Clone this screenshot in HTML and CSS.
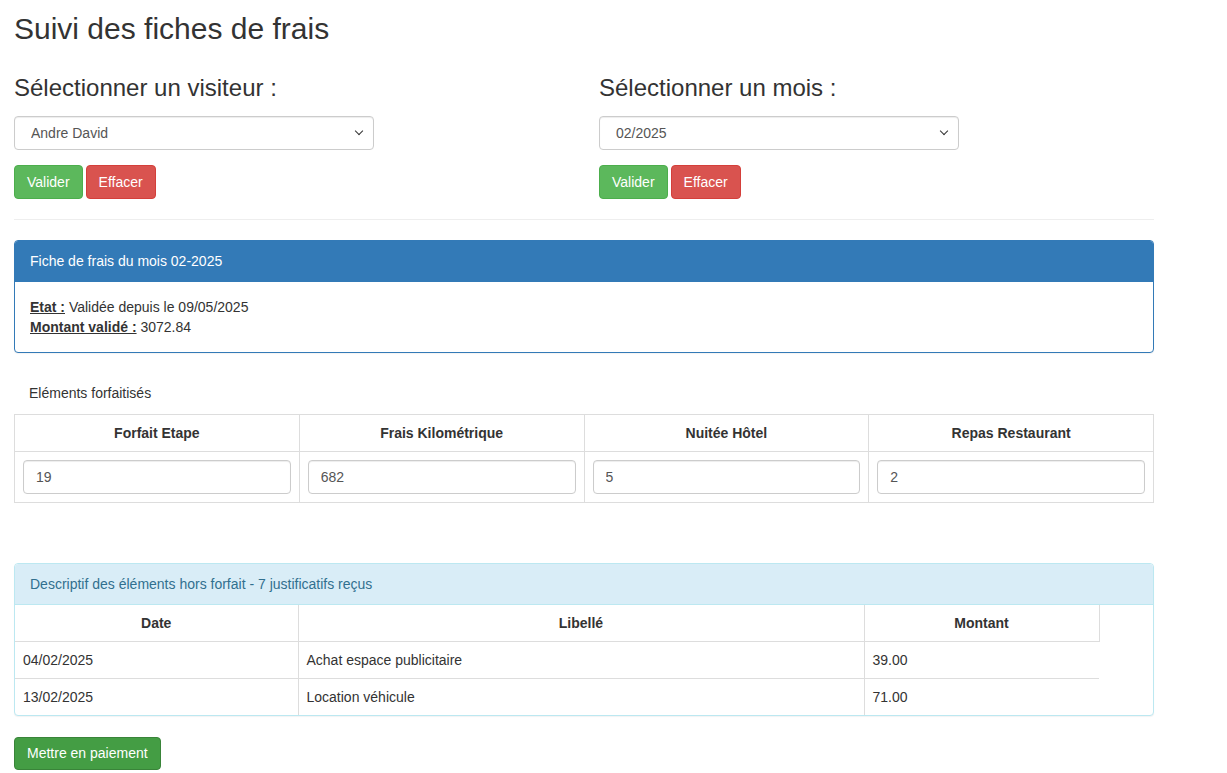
FILE: index.html
```html
<!DOCTYPE html>
<html lang="fr">
<head>
<meta charset="utf-8">
<title>Suivi des fiches de frais</title>
<link rel="stylesheet" href="styles.css">
</head>
<body>
<div class="container">
  <h2 class="title">Suivi des fiches de frais</h2>
  <div class="row">
    <div class="col">
      <h3 class="sub">Sélectionner un visiteur :</h3>
      <div class="select-wrap">
        <select class="form-control"><option>Andre David</option></select>
      </div>
      <div class="btns">
        <button class="btn btn-success">Valider</button>
        <button class="btn btn-danger">Effacer</button>
      </div>
    </div>
    <div class="col">
      <h3 class="sub">Sélectionner un mois :</h3>
      <div class="select-wrap">
        <select class="form-control"><option>02/2025</option></select>
      </div>
      <div class="btns">
        <button class="btn btn-success">Valider</button>
        <button class="btn btn-danger">Effacer</button>
      </div>
    </div>
  </div>
  <hr class="sep">

  <div class="panel panel-primary">
    <div class="panel-heading">Fiche de frais du mois 02-2025</div>
    <div class="panel-body">
      <div><strong class="ul">Etat :</strong> Validée depuis le 09/05/2025</div>
      <div><strong class="ul">Montant validé :</strong> 3072.84</div>
    </div>
  </div>

  <div class="caption">Eléments forfaitisés</div>
  <table class="table table-forfait">
    <thead>
      <tr><th>Forfait Etape</th><th>Frais Kilométrique</th><th>Nuitée Hôtel</th><th>Repas Restaurant</th></tr>
    </thead>
    <tbody>
      <tr>
        <td><input class="form-control input" type="text" value="19"></td>
        <td><input class="form-control input" type="text" value="682"></td>
        <td><input class="form-control input" type="text" value="5"></td>
        <td><input class="form-control input" type="text" value="2"></td>
      </tr>
    </tbody>
  </table>

  <div class="panel panel-info">
    <div class="panel-heading">Descriptif des éléments hors forfait - 7 justificatifs reçus</div>
    <table class="table table-hf">
      <colgroup><col class="c-date"><col class="c-lib"><col class="c-mont"></colgroup>
      <thead>
        <tr><th>Date</th><th>Libellé</th><th>Montant</th></tr>
      </thead>
      <tbody>
        <tr><td>04/02/2025</td><td>Achat espace publicitaire</td><td>39.00</td></tr>
        <tr><td>13/02/2025</td><td>Location véhicule</td><td>71.00</td></tr>
      </tbody>
    </table>
  </div>

  <button class="btn btn-pay">Mettre en paiement</button>
</div>
</body>
</html>
```

FILE: styles.css
```css
* { box-sizing: border-box; }
html, body { margin: 0; padding: 0; background: #fff; }
body {
  font-family: "Liberation Sans", Arial, Helvetica, sans-serif;
  font-size: 14px;
  line-height: 20px;
  color: #333;
}
.container { width: 1140px; margin-left: 14px; }

.title {
  font-size: 30px;
  font-weight: 500;
  line-height: 33px;
  margin: 12px 0 10px;
}
.row {
  display: grid;
  grid-template-columns: 570px 570px;
  column-gap: 15px;
}
.sub {
  font-size: 24px;
  font-weight: 500;
  line-height: 26px;
  margin: 20px 0 15px;
}
.select-wrap { width: 360px; position: relative; }
.select-wrap::after {
  content: "";
  position: absolute;
  right: 12px;
  top: 12px;
  width: 5px;
  height: 5px;
  border-right: 1.8px solid #333;
  border-bottom: 1.8px solid #333;
  transform: rotate(45deg);
  pointer-events: none;
}
.form-control {
  display: block;
  width: 100%;
  height: 34px;
  padding: 6px 12px;
  font-family: inherit;
  font-size: 14px;
  line-height: 20px;
  color: #555;
  background: #fff;
  border: 1px solid #ccc;
  border-radius: 4px;
  box-shadow: inset 0 1px 1px rgba(0,0,0,.075);
}
select.form-control {
  -webkit-appearance: none;
  appearance: none;
  padding-left: 16px;
}
.btns { display: flex; gap: 3px; margin-top: 15px; }
.btn {
  display: inline-block;
  height: 34px;
  padding: 6px 12px;
  font-family: inherit;
  font-size: 14px;
  line-height: 20px;
  border: 1px solid transparent;
  border-radius: 4px;
  color: #fff;
  cursor: pointer;
}
.btn-success { background: #5cb85c; border-color: #4cae4c; }
.btn-danger { background: #d9534f; border-color: #d43f3a; }
.btn-pay { background: #449d44; border-color: #398439; height: 33px; padding-top: 5px; }

.sep {
  border: 0;
  border-top: 1px solid #eee;
  margin: 20px 0 20px;
  height: 0;
}

.panel {
  background: #fff;
  border: 1px solid transparent;
  border-radius: 4px;
  box-shadow: 0 1px 1px rgba(0,0,0,.05);
  margin-bottom: 20px;
}
.panel-heading {
  padding: 10px 15px;
  border-bottom: 1px solid transparent;
  border-top-left-radius: 3px;
  border-top-right-radius: 3px;
}
.panel-body { padding: 15px; }
.panel-primary { border-color: #337ab7; }
.panel-primary > .panel-heading { background: #337ab7; border-color: #337ab7; color: #fff; }
.panel-info { border-color: #bce8f1; margin-top: 60px; margin-bottom: 21px; overflow: hidden; }
.panel-info > .panel-heading { background: #d9edf7; border-color: #bce8f1; color: #31708f; }
.ul { text-decoration: underline; font-weight: 700; }

.caption { padding: 10px 15px 11px; color: #333; }

.table { border-collapse: collapse; border-spacing: 0; }
.table th { font-weight: 700; text-align: center; }
.table th, .table td { padding: 8px; line-height: 20px; vertical-align: top; }

.table-forfait { width: 1140px; table-layout: fixed; border: 1px solid #ddd; }
.table-forfait th, .table-forfait td { border: 1px solid #ddd; }

.table-hf { width: 1084px; table-layout: fixed; }
.c-date { width: 283px; }
.c-lib { width: 566px; }
.c-mont { width: 235px; }
.table-hf th, .table-hf td { border: 1px solid #ddd; text-align: left; }
.table-hf th { text-align: center; }
.table-hf tr > :first-child { border-left: 0; }
.table-hf thead th { border-top: 0; }
.table-hf tbody td:last-child { border-right: 0; }
.table-hf tbody tr:last-child td { border-bottom: 0; }
```
